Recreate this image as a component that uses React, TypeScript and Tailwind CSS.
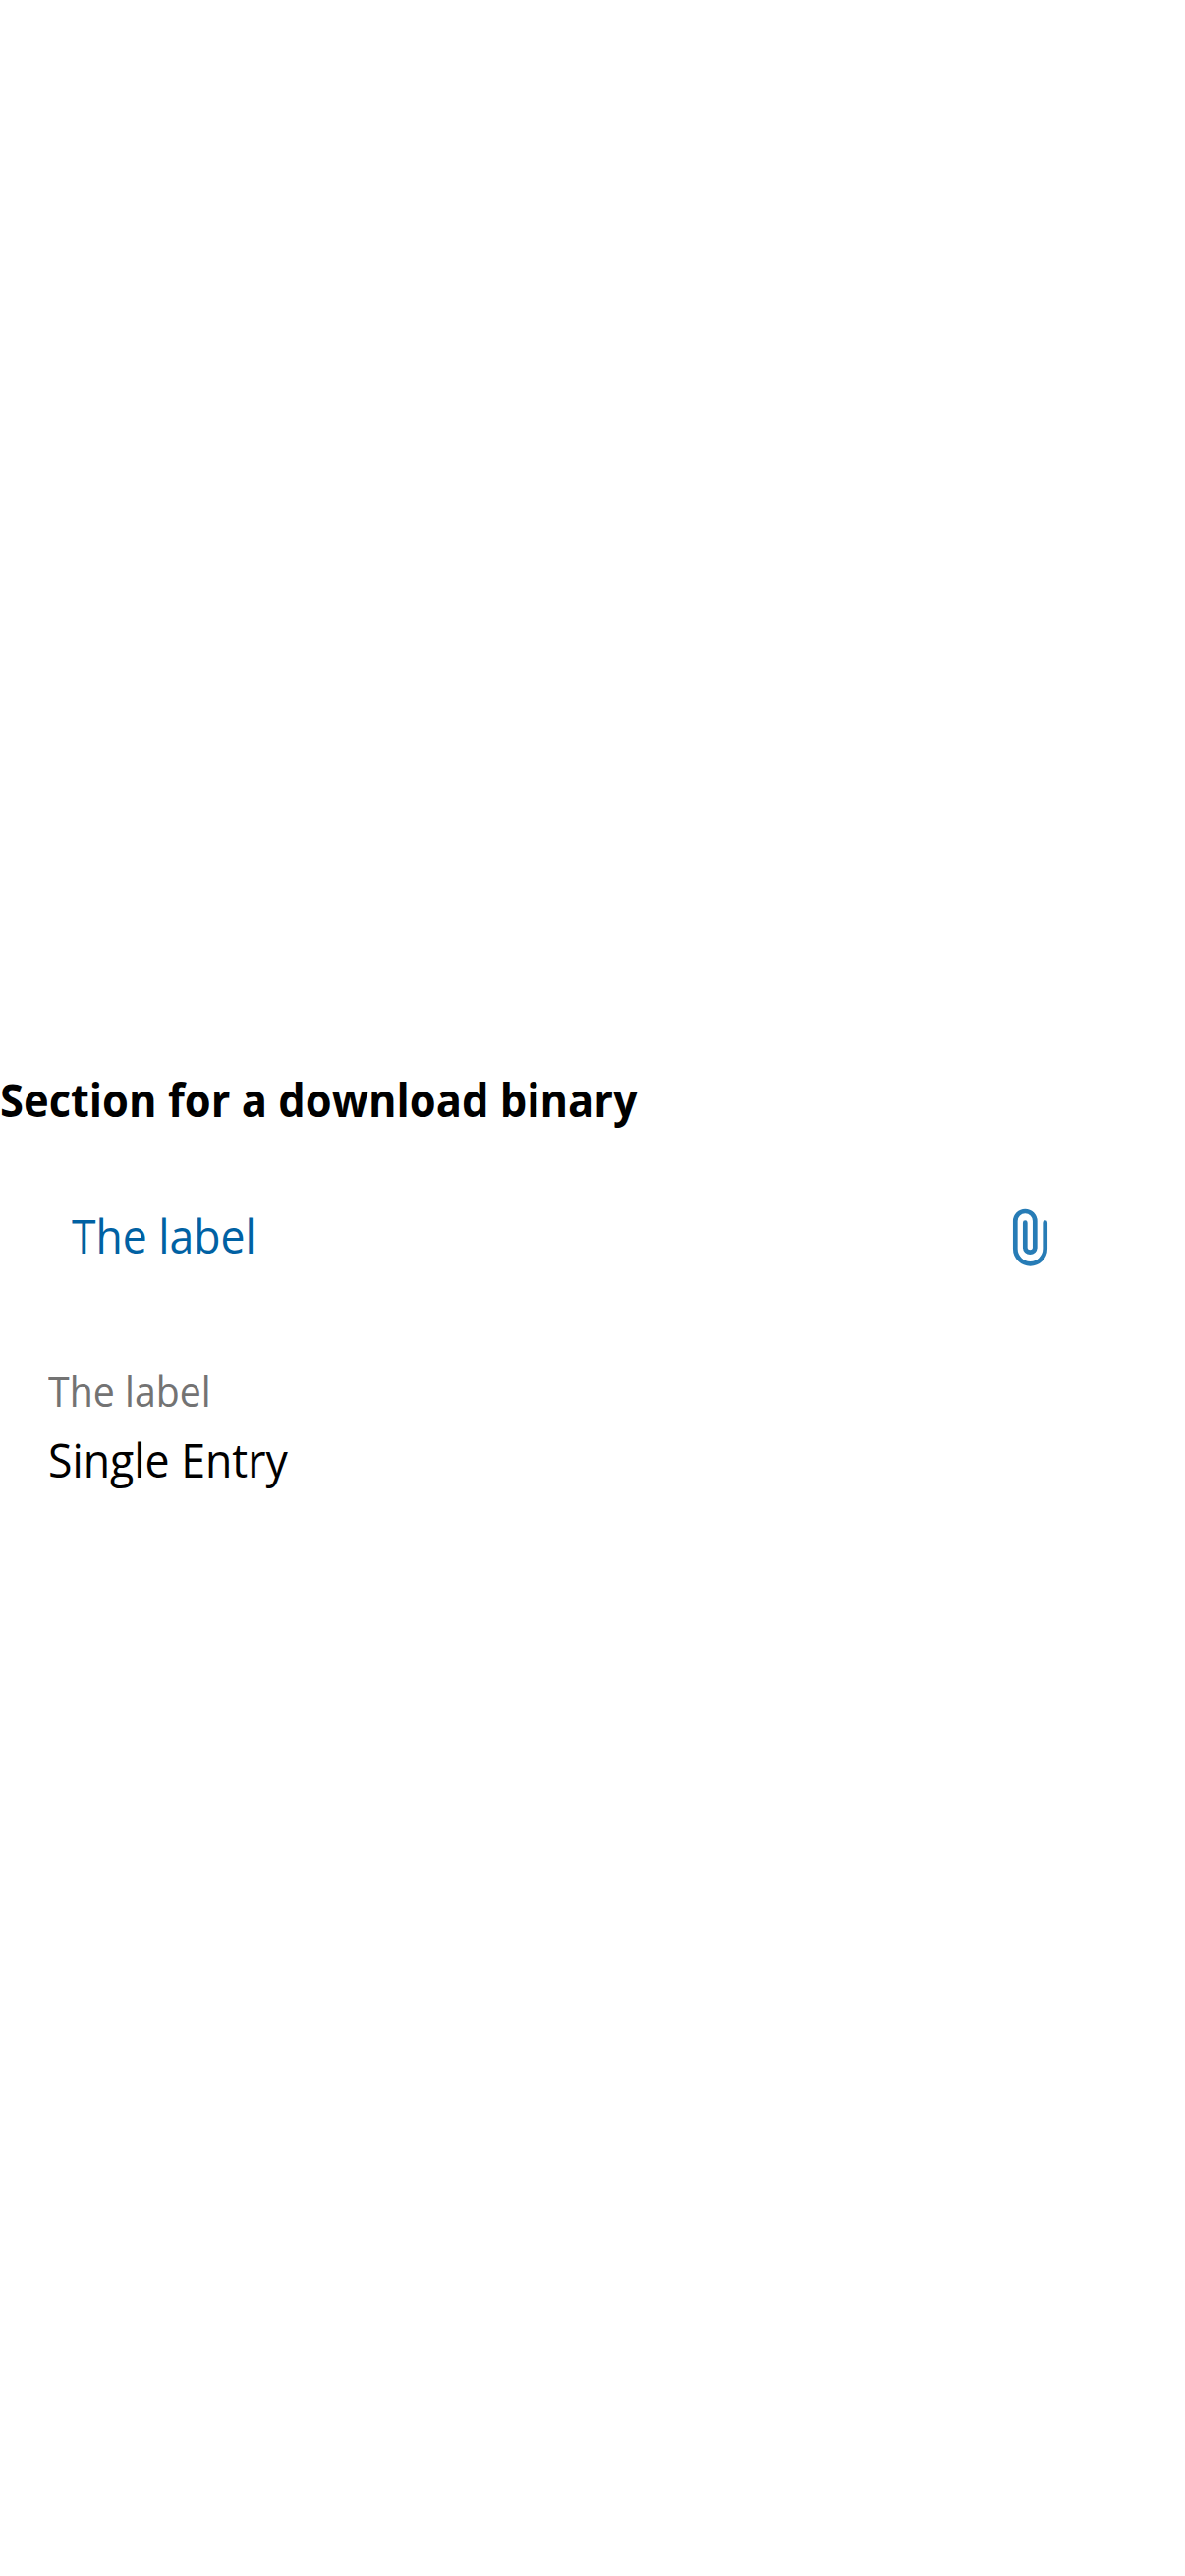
function PaperclipIcon() {
  return (
    <svg className="h-[60px] w-9 shrink-0 overflow-visible" viewBox="0 -2 36 60" fill="none" stroke="#277cb6" strokeWidth="4.7" strokeLinecap="round">
      <path d="M33.7 14.7V41.1A15.2 15.2 0 0 1 3.3 41.1V13A10 10 0 0 1 23.3 13V39.7A5 5 0 0 1 13.3 39.7V14.7" />
    </svg>
  );
}

export default function App() {
  return (
    <main className="flex min-h-[2622px] w-[1206px] flex-col bg-white pt-[1089px] font-['Open_Sans',sans-serif] text-[47px] leading-[60px] text-black">
      <h1 className="origin-left scale-x-[0.925] self-start whitespace-nowrap font-bold">Section for a download binary</h1>
      <button className="mt-[79px] flex items-center justify-between pr-[140px] pl-[73px] text-[#0061a3]">
        <span className="origin-left scale-x-[0.947] whitespace-nowrap">The label</span>
        <PaperclipIcon />
      </button>
      <dl className="mt-[98px] flex flex-col items-start pl-[49px]">
        <dt className="origin-left scale-x-[0.924] whitespace-nowrap text-[42.5px] text-[#737373]">The label</dt>
        <dd className="mt-[10px] origin-left scale-x-[0.949] whitespace-nowrap">Single Entry</dd>
      </dl>
    </main>
  );
}
